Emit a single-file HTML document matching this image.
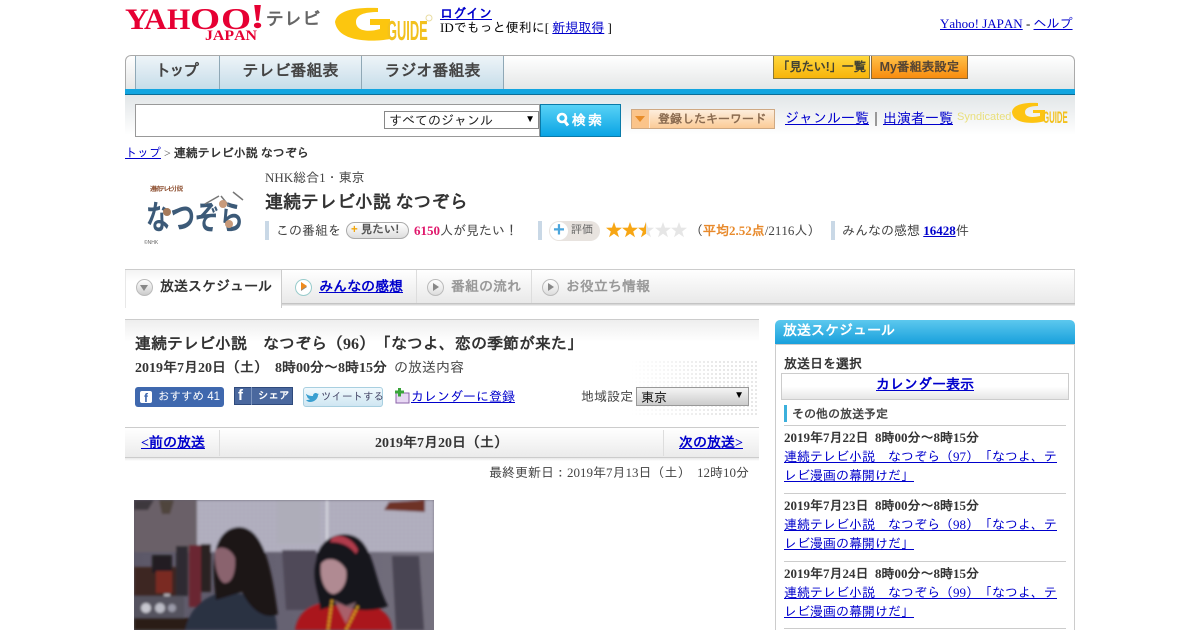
<!DOCTYPE html>
<html lang="ja"><head><meta charset="utf-8"><title>連続テレビ小説 なつぞら</title>
<style>
html,body{margin:0;padding:0;background:#fff;overflow:hidden;height:630px}
body{width:1200px;position:relative;font-family:"Liberation Serif","IPAGothic","Noto Sans CJK JP",serif;font-size:13px;color:#333;text-spacing-trim:space-all;font-kerning:none}
.a{position:absolute;white-space:nowrap}
a{color:#0000cc;text-decoration:underline}
b{font-weight:bold}
.sans{font-family:"Liberation Sans","IPAGothic","Noto Sans CJK JP",sans-serif}
.tab{position:absolute;top:56px;height:33px;background:linear-gradient(#eef4f8,#c6dde9);border-right:1px solid #8fa8b6;text-align:center;line-height:32px;font-size:16px;font-weight:bold;color:#444;font-family:"Liberation Sans","IPAGothic","Noto Sans CJK JP",sans-serif}
.sep{position:absolute;width:4px;height:19px;background:#c9d8e6}
.t2{position:absolute;top:270px;height:33px;background:linear-gradient(#fff,#e9e9e9);border-right:1px solid #ddd}
.dot{position:absolute;width:15px;height:15px;border-radius:50%;background:linear-gradient(#fff,#ddd);border:1px solid #bbb}
.dot:after{content:"";position:absolute;left:5px;top:3px;border-left:6px solid #888;border-top:4px solid transparent;border-bottom:4px solid transparent}
.tt{position:absolute;top:279px;font-size:14px;font-weight:bold;color:#999;white-space:nowrap}
.hr{position:absolute;height:1px;background:#ccc}
.sl{left:784px;font-size:13px;white-space:nowrap;position:absolute}
</style></head><body>

<!-- header logos -->
<svg class="a" style="left:125px;top:4px" width="140" height="40" viewBox="0 0 140 40" font-family="Liberation Serif,serif" font-weight="bold" fill="#e60033">
<text transform="translate(0,25) scale(1.1,1)" font-size="30">Y</text>
<text transform="translate(19,25) scale(1.05,1)" font-size="30">A</text>
<text transform="translate(42,25)" font-size="30">H</text>
<text transform="translate(65,25) scale(1.25,1)" font-size="31">O</text>
<text transform="translate(96,25) scale(1.25,1)" font-size="31">O</text>
<text transform="translate(125,24) scale(1.3,1)" font-size="35">!</text>
<text x="80" y="36" font-size="15" textLength="52" lengthAdjust="spacingAndGlyphs">JAPAN</text>
</svg>
<div class="a sans" style="left:266px;top:9px;font-size:18px;font-weight:bold;color:#666">テレビ</div>
<svg class="a" style="left:334px;top:5px" width="100" height="38" viewBox="0 0 100 38">
<path d="M1 17C3 7 16 2 44 3L44 7C30 7 22 10 22 17C22 25 32 28 46 24L46 20L36 20L36 14L56 14L56 34C40 37 4 38 1 17Z" fill="#fcc60f"/>
<text transform="translate(53,35) scale(.46,1)" font-family="Liberation Sans,sans-serif" font-weight="bold" font-size="28" fill="#f2c11e">GUIDE</text>
<circle cx="95" cy="13" r="3" fill="none" stroke="#e8dca0"/>
</svg>
<div class="a" style="left:440px;top:7px;font-size:13px;line-height:14px;color:#000"><a href="#"><b>ログイン</b></a><br>IDでもっと便利に[ <a href="#">新規取得</a> ]</div>
<div class="a" style="left:940px;top:16px;color:#000"><a href="#">Yahoo! JAPAN</a> - <a href="#">ヘルプ</a></div>

<!-- nav -->
<div class="a" style="left:125px;top:55px;width:948px;height:34px;background:linear-gradient(#fff,#e4e6e6);border:1px solid #aaa;border-bottom:0;border-radius:6px 6px 0 0"></div>
<div class="tab" style="left:135px;width:83px;border-left:1px solid #8fa8b6;letter-spacing:-2px;text-indent:-3px">トップ</div>
<div class="tab" style="left:220px;width:141px">テレビ番組表</div>
<div class="tab" style="left:362px;width:141px">ラジオ番組表</div>
<div class="a sans" style="left:773px;top:56px;width:97px;height:23px;background:linear-gradient(#ffd83c,#f7b40a);border:1px solid #8a7a3a;border-top:0;box-sizing:border-box;text-align:center;font-size:12.5px;font-weight:bold;line-height:22px;color:#443;letter-spacing:-.4px">「見たい!」一覧</div>
<div class="a sans" style="left:871px;top:56px;width:97px;height:23px;background:linear-gradient(#ffc048,#f88c0e);border:1px solid #8a6a3a;border-top:0;box-sizing:border-box;text-align:center;font-size:12.5px;font-weight:bold;line-height:22px;color:#543">My番組表設定</div>
<div class="a" style="left:125px;top:89px;width:950px;height:6px;background:#12a5e0;border-bottom:1px solid #0b6d96;box-sizing:border-box"></div>

<!-- search bar -->
<div class="a" style="left:125px;top:95px;width:950px;height:40px;background:linear-gradient(#e2e6e8,#fff)"></div>
<div class="a" style="left:135px;top:104px;width:405px;height:33px;background:#fff;border:1px solid #999;box-sizing:border-box"></div>
<div class="a" style="left:384px;top:111px;width:155px;height:18px;background:#fff;border:1px solid #888;box-sizing:border-box;font-size:13px;line-height:17px;padding-left:4px;color:#222">すべてのジャンル<span style="position:absolute;right:3px;top:-1px;font-size:10px;color:#000">▼</span></div>
<div class="a" style="left:540px;top:104px;width:81px;height:33px;background:linear-gradient(#58d2f6,#0aa4e4);border:1px solid #0a7aa8;box-sizing:border-box"></div>
<svg class="a" style="left:556px;top:112px" width="14" height="15" viewBox="0 0 14 15"><circle cx="6" cy="6" r="4" fill="none" stroke="#fff" stroke-width="2.600"/><path d="M8.500 9L12 13.500" stroke="#fff" stroke-width="3"/></svg>
<div class="a sans" style="left:572px;top:111px;font-size:14px;font-weight:bold;color:#fff;letter-spacing:2px;line-height:18px">検索</div>
<div class="a" style="left:631px;top:109px;width:144px;height:20px;background:linear-gradient(#fdeedd,#fbcb97);border:1px solid #cfa983;box-sizing:border-box"></div>
<div class="a" style="left:632px;top:110px;width:17px;height:18px;background:#fbc48a;border-right:1px solid #fde6cf"></div>
<div class="a" style="left:635px;top:116px;border-top:6px solid #e88d2a;border-left:5px solid transparent;border-right:5px solid transparent"></div>
<div class="a sans" style="left:658px;top:111px;font-size:12px;line-height:16px;font-weight:bold;color:#8a6b50">登録したキーワード</div>
<div class="a" style="left:785px;top:111px;font-size:14px"><a href="#">ジャンル一覧</a></div>
<div class="a" style="left:875px;top:112px;width:2px;height:14px;background:#999"></div>
<div class="a" style="left:883px;top:111px;font-size:14px"><a href="#">出演者一覧</a></div>
<div class="a sans" style="left:957px;top:111px;font-size:11px;color:#e9df7c">Syndicated</div>
<svg class="a" style="left:1011px;top:101px" width="58" height="24" viewBox="0 0 58 24">
<path d="M1 11C2 4 12 1 27 2L27 5C19 5 14 7 14 11C14 16 20 17 29 15L29 12L22 12L22 9L34 9L34 20C24 23 2 24 1 11Z" fill="#fdc412"/>
<text transform="translate(32,22) scale(.46,1)" font-family="Liberation Sans,sans-serif" font-weight="bold" font-size="17" fill="#f2c11e">GUIDE</text>
</svg>

<!-- breadcrumb -->
<div class="a" style="left:125px;top:146px;font-size:12px;color:#555"><a href="#">トップ</a> &gt; <b style="color:#333">連続テレビ小説 なつぞら</b></div>

<!-- program -->
<svg class="a" style="left:143px;top:182px" width="105" height="66" viewBox="0 0 105 66">
<text x="7" y="9" font-family="Noto Sans CJK JP,sans-serif" font-size="6" font-weight="bold" fill="#8a4a2a" textLength="33">連続テレビ小説</text>
<text x="3" y="47" font-family="Noto Sans CJK JP,sans-serif" font-size="33" font-weight="bold" fill="#3c5a78" textLength="98" lengthAdjust="spacingAndGlyphs">なつぞら</text>
<path d="M62 22L76 14M78 14L86 24M90 10L100 18" stroke="#777" stroke-width="1.500" fill="none"/><circle cx="24" cy="30" r="4" fill="#a67a5a"/><circle cx="80" cy="22" r="4" fill="#c89a7a"/><circle cx="86" cy="42" r="4" fill="#c89a7a"/>
<text x="1" y="62" font-family="Liberation Sans,sans-serif" font-size="5" fill="#666">©NHK</text>
</svg>
<div class="a" style="left:265px;top:170px;font-size:13px;color:#444">NHK総合1・東京</div>
<div class="a" style="left:265px;top:192px;font-size:18px;font-weight:bold;color:#333">連続テレビ小説 なつぞら</div>
<div class="sep" style="left:265px;top:221px"></div>
<div class="a" style="left:276px;top:223px;color:#444">この番組を</div>
<div class="a sans" style="left:346px;top:222px;width:63px;height:17px;box-sizing:border-box;border:1px solid #aaa;border-radius:9px;background:linear-gradient(#fff,#ddd);font-size:11.5px;font-weight:bold;line-height:14px;color:#555;padding-left:4px"><span style="color:#f2a60c">+</span> 見たい!</div>
<div class="a" style="left:414px;top:223px;color:#444"><b style="color:#e0186c">6150</b>人が見たい！</div>
<div class="sep" style="left:538px;top:221px"></div>
<div class="a" style="left:549px;top:221px;width:51px;height:20px;background:#e8e3df;border-radius:10px"></div>
<div class="a" style="left:550px;top:222px;width:18px;height:18px;border-radius:50%;background:#fff;color:#4ca6dc;font:bold 20px/17px 'Liberation Sans',sans-serif;text-align:center">+</div>
<div class="a sans" style="left:571px;top:224px;font-size:11px;color:#666">評価</div>
<svg class="a" style="left:606px;top:222px" width="82" height="16" viewBox="0 0 82 16">
<defs><path id="s" d="M8 0L10 5.600L16 5.800L11.200 9.500L13 15.200L8 11.800L3 15.200L4.800 9.500L0 5.800L6 5.600Z"/><clipPath id="h"><rect x="32" y="0" width="8" height="16"/></clipPath></defs>
<use href="#s" x="0" fill="#f7a614"/><use href="#s" x="16" fill="#f7a614"/><use href="#s" x="32" fill="#e6e6e6"/><g clip-path="url(#h)"><use href="#s" x="32" fill="#f7a614"/></g><use href="#s" x="49" fill="#e6e6e6"/><use href="#s" x="65" fill="#e6e6e6"/>
</svg>
<div class="a" style="left:690px;top:223px;color:#444">（<b style="color:#e88a2c">平均2.52点</b>/2116人）</div>
<div class="sep" style="left:831px;top:221px"></div>
<div class="a" style="left:842px;top:223px;color:#444">みんなの感想 <a href="#"><b>16428</b></a>件</div>

<!-- tabs -->
<div class="a" style="left:125px;top:269px;width:950px;height:1px;background:#ccc"></div>
<div class="a" style="left:125px;top:303px;width:950px;height:3px;background:linear-gradient(#bbb,#f4f4f4)"></div>
<div class="t2" style="left:282px;width:134px"></div>
<div class="t2" style="left:417px;width:114px"></div>
<div class="t2" style="left:532px;width:542px"></div>
<div class="a" style="left:125px;top:270px;width:157px;height:38px;background:linear-gradient(#f3f3f3,#fff 30%);border-right:1px solid #ccc;border-left:1px solid #e8e8e8;box-sizing:border-box"></div>
<div class="a" style="left:136px;top:279px;width:15px;height:15px;border-radius:50%;background:linear-gradient(#fff,#ccc);border:1px solid #bbb"></div>
<div class="a" style="left:140px;top:285px;border-top:6px solid #888;border-left:4px solid transparent;border-right:4px solid transparent"></div>
<div class="tt" style="left:160px;color:#333">放送スケジュール</div>
<div class="dot" style="left:295px;top:279px;background:#fff;border-color:#9cc"></div>
<div class="a" style="left:301px;top:282px;border-left:6px solid #ee8a1e;border-top:4px solid transparent;border-bottom:4px solid transparent"></div>
<div class="tt" style="left:319px"><a href="#">みんなの感想</a></div>
<div class="dot" style="left:427px;top:279px"></div>
<div class="tt" style="left:451px">番組の流れ</div>
<div class="dot" style="left:542px;top:279px"></div>
<div class="tt" style="left:566px">お役立ち情報</div>

<!-- title area -->
<div class="a" style="left:125px;top:319px;width:634px;height:1px;background:#ccc"></div>
<div class="a" style="left:125px;top:320px;width:634px;height:22px;background:linear-gradient(#eee,#fff)"></div>
<div class="a" style="left:630px;top:360px;width:129px;height:55px;background-image:radial-gradient(#e6e6e6 1px,transparent 1.200px);background-size:4px 4px;-webkit-mask-image:linear-gradient(to right,transparent,#000 70%)"></div>
<div class="a" style="left:135px;top:335px;font-size:16px;font-weight:bold;color:#333">連続テレビ小説　なつぞら（96）「なつよ、恋の季節が来た」</div>
<div class="a" style="left:135px;top:360px;font-size:14px;color:#444"><b style="color:#333">2019年7月20日（土）&nbsp; 8時00分～8時15分</b>&nbsp; の放送内容</div>
<div class="a sans" style="left:135px;top:387px;width:89px;height:20px;background:#3f68ae;border-radius:3px;color:#fff;font-size:11.500px;line-height:20px;text-indent:23px">おすすめ 41</div>
<div class="a sans" style="left:140px;top:391px;width:12px;height:12px;background:#fff;border-radius:2px;color:#3f68ae;font-size:12px;font-weight:bold;line-height:14px;text-align:center">f</div>
<div class="a sans" style="left:234px;top:387px;width:59px;height:18px;background:#4a689e;border:1px solid #2f4a7c;box-sizing:border-box;color:#fff;font-size:10.500px;font-weight:bold;line-height:16px;text-indent:23px">シェア</div>
<div class="a sans" style="left:238px;top:388px;font-size:15px;font-weight:bold;color:#fff;line-height:16px">f</div>
<div class="a" style="left:251px;top:387px;width:1px;height:18px;background:#7e96c0"></div>
<div class="a sans" style="left:303px;top:387px;width:80px;height:20px;background:linear-gradient(#f0f9fd,#cfe6f2);border:1px solid #a8cfe0;box-sizing:border-box;border-radius:3px;color:#446;font-size:10.500px;line-height:18px;text-indent:17px">ツイートする</div>
<svg class="a" style="left:306px;top:392px" width="13" height="10" viewBox="0 0 13 10"><path d="M0 2C3 4 5 4 7 4C7 1 10 0 12 2L13 1.600L12 3C12 7 8 10 4 10C2 10 1 9 0 8C2 8 3 8 4 7C2 7 1 5 1 4C0 3 0 3 0 2Z" fill="#3a9fd0"/></svg>
<svg class="a" style="left:394px;top:388px" width="16" height="16" viewBox="0 0 16 16"><rect x="2" y="5" width="13" height="10" fill="#e8d8f4" stroke="#8a62a8"/><path d="M4 0h3v2.500h3v3h-3v3h-3v-3h-3v-3h3z" fill="#3aa53a"/></svg>
<div class="a" style="left:411px;top:389px;font-size:13px"><a href="#">カレンダーに登録</a></div>
<div class="a" style="left:581px;top:389px;font-size:13px;color:#444">地域設定</div>
<div class="a" style="left:636px;top:387px;width:113px;height:19px;background:linear-gradient(#f4f4f4,#ccc);border:1px solid #999;box-sizing:border-box;line-height:19px;padding-left:4px;font-size:13px;color:#111">東京<span style="position:absolute;right:4px;top:-2px;font-size:10px;color:#000">▼</span></div>

<!-- prev/next -->
<div class="a" style="left:125px;top:427px;width:634px;height:1px;background:#ccc"></div>
<div class="a" style="left:125px;top:428px;width:634px;height:29px;background:linear-gradient(#fff,#ebebeb);border-bottom:1px solid #ccc"></div>
<div class="a" style="left:125px;top:458px;width:634px;height:3px;background:linear-gradient(#e8e8e8,#fff)"></div>
<div class="a" style="left:219px;top:430px;width:1px;height:26px;background:#ddd"></div>
<div class="a" style="left:663px;top:430px;width:1px;height:26px;background:#ddd"></div>
<div class="a" style="left:141px;top:435px;font-size:14px;font-weight:bold"><a href="#">&lt;前の放送</a></div>
<div class="a" style="left:375px;top:435px;font-size:14px;font-weight:bold;color:#333">2019年7月20日（土）</div>
<div class="a" style="left:679px;top:435px;font-size:14px;font-weight:bold"><a href="#">次の放送&gt;</a></div>
<div class="a" style="left:489px;top:465px;font-size:13px;color:#444">最終更新日：2019年7月13日（土）&nbsp; 12時10分</div>

<!-- photo -->
<svg class="a" style="left:134px;top:500px" width="300" height="130" viewBox="0 0 300 130">
<defs><filter id="b" x="-10%" y="-10%" width="120%" height="120%"><feGaussianBlur stdDeviation="1.300"/></filter>
<pattern id="pg" width="4" height="4" patternUnits="userSpaceOnUse"><rect width="4" height="4" fill="#b2b0c0"/><circle cx="2" cy="2" r=".5" fill="#828090"/></pattern>
<linearGradient id="w" x1="0" x2="1" y1="0" y2="0"><stop offset="0" stop-color="#5c5868"/><stop offset=".6" stop-color="#686474"/><stop offset="1" stop-color="#75717e"/></linearGradient></defs>
<rect width="300" height="130" fill="url(#w)"/>
<g filter="url(#b)">
<rect width="63" height="52" fill="#6a6068"/>
<path d="M0 0H20L14 10H0Z" fill="#3c383e"/><path d="M25 0H40L36 14H28Z" fill="#50443e"/>
<rect x="63" y="0" width="237" height="52" fill="url(#pg)"/>
<rect x="143" y="0" width="43" height="44" fill="#aeadb9"/>
<rect x="192" y="0" width="2" height="52" fill="#d8d8e0"/>
<path d="M250 10L255 2L291 0V12Z" fill="#6e3028"/>
<path d="M148 50H182L186 110H152Z" fill="#4f4a58"/><path d="M258 56H285L290 130H262Z" fill="#4a4552"/>
<rect x="0" y="67" width="42" height="40" fill="#3c2822"/>
<rect x="18" y="55" width="20" height="18" fill="#201a20"/><rect x="22" y="71" width="16" height="22" fill="#7a2a22"/>
<rect x="30" y="94" width="6" height="10" fill="#c4c0c6"/>
<rect x="42" y="46" width="12" height="50" fill="#2e2a30"/><rect x="55" y="45" width="12" height="62" fill="#6a2630"/><rect x="67" y="44" width="10" height="48" fill="#2a2024"/>
<rect x="0" y="96" width="50" height="22" fill="#55525e"/><circle cx="12" cy="108" r="5" fill="#c8c8d0"/><circle cx="26" cy="108" r="5" fill="#bcbcc6"/><circle cx="38" cy="108" r="4" fill="#9a9aa8"/>
<rect x="0" y="118" width="56" height="12" fill="#2c1c18"/>
<path d="M51 130C56 108 68 98 88 92L128 96C140 104 143 120 143 130Z" fill="#2a3242"/>
<path d="M82 100C78 70 76 30 104 27C130 26 138 70 144 114C132 120 118 112 108 92Z" fill="#1a1418"/>
<path d="M81 50C88 44 98 50 101 58C102 72 98 84 90 83C84 80 80 66 81 50Z" fill="#8a646e"/>
<path d="M161 130C164 112 176 104 194 102L232 104C250 108 258 118 258 130Z" fill="#aa141e"/>
<path d="M186 110C186 96 176 80 182 60C184 40 204 30 220 36C240 44 240 80 254 106C240 112 220 112 206 104Z" fill="#17121a"/>
<path d="M187 64C192 56 206 58 212 70C214 82 208 92 200 94C192 94 185 80 187 64Z" fill="#b08a92"/>
<path d="M198 38C206 32 220 40 224 50L222 54C216 46 208 42 196 42Z" fill="#b03a4c"/>
<path d="M198 100L194 130M224 106L212 130" stroke="#d8a020" stroke-width="2.500" fill="none" stroke-dasharray="3 1"/>
<path d="M200 100L212 106L222 102L212 124Z" fill="#a8808a" opacity=".7"/>
</g>
</svg>

<!-- sidebar -->
<div class="a" style="left:775px;top:344px;width:300px;height:286px;border:1px solid #ccc;border-bottom:0;box-sizing:border-box;background:#fff"></div>
<div class="a" style="left:775px;top:320px;width:300px;height:24px;background:linear-gradient(#5cc8ee,#18a0dc);border-radius:5px 5px 0 0;color:#fff;font-size:14px;font-weight:bold;line-height:24px;text-indent:8px">放送スケジュール</div>
<div class="a" style="left:784px;top:356px;font-size:13px;font-weight:bold;color:#333">放送日を選択</div>
<div class="a" style="left:781px;top:373px;width:288px;height:27px;box-sizing:border-box;border:1px solid #ccc;background:linear-gradient(#fff 50%,#e6e6e6);text-align:center;font-size:14px;font-weight:bold;line-height:23px"><a href="#">カレンダー表示</a></div>
<div class="a" style="left:784px;top:405px;width:3px;height:17px;background:#3cb0dc"></div>
<div class="a" style="left:792px;top:407px;font-size:12px;font-weight:bold;color:#444">その他の放送予定</div>
<div class="hr" style="left:784px;top:425px;width:282px"></div>
<div class="sl" style="top:430px"><b>2019年7月22日&nbsp; 8時00分～8時15分</b></div>
<div class="sl" style="top:447px;line-height:19px"><a href="#">連続テレビ小説　なつぞら（97）「なつよ、テ<br>レビ漫画の幕開けだ」</a></div>
<div class="hr" style="left:784px;top:493px;width:282px"></div>
<div class="sl" style="top:498px"><b>2019年7月23日&nbsp; 8時00分～8時15分</b></div>
<div class="sl" style="top:515px;line-height:19px"><a href="#">連続テレビ小説　なつぞら（98）「なつよ、テ<br>レビ漫画の幕開けだ」</a></div>
<div class="hr" style="left:784px;top:561px;width:282px"></div>
<div class="sl" style="top:566px"><b>2019年7月24日&nbsp; 8時00分～8時15分</b></div>
<div class="sl" style="top:583px;line-height:19px"><a href="#">連続テレビ小説　なつぞら（99）「なつよ、テ<br>レビ漫画の幕開けだ」</a></div>
<div class="hr" style="left:784px;top:628px;width:282px"></div>
</body></html>
